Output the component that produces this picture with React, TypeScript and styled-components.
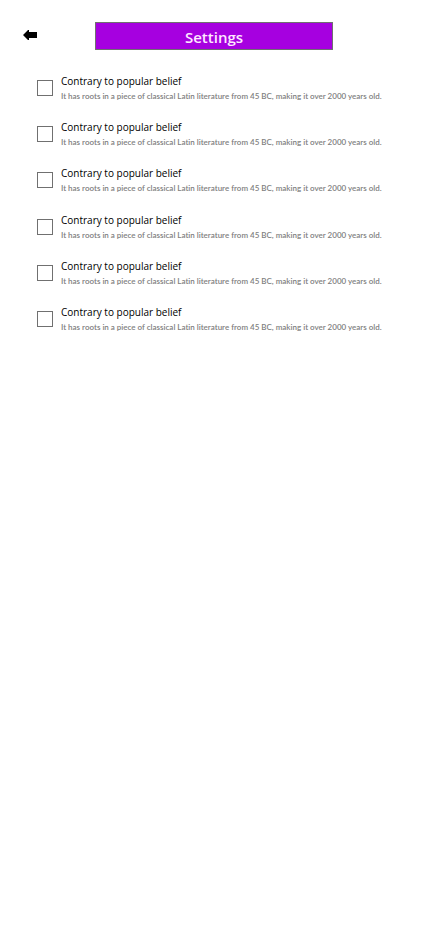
import React from "react";
import styled, { createGlobalStyle } from "styled-components";

const GlobalStyle = createGlobalStyle`
  * { box-sizing: border-box; }
  body { margin: 0; background: #ffffff; font-family: "Open Sans", "Noto Sans", sans-serif; }
`;

const Page = styled.div`
  padding: 22px 23px;
`;

const Header = styled.header`
  display: grid;
  grid-template-columns: 72px 1fr 72px;
  align-items: center;
`;

const BackButton = styled.button`
  width: 14px;
  height: 12px;
  margin: 0 0 2px;
  padding: 0;
  border: 0;
  background: none;
  cursor: pointer;
  svg { display: block; }
`;

const Title = styled.h1`
  height: 28px;
  margin: 0;
  border: 1px solid #707070;
  background: #a600e0;
  color: #ffe8ff;
  font-size: 15px;
  font-weight: 600;
  line-height: 28px;
  text-align: center;
`;

const OptionList = styled.main`
  display: flex;
  flex-direction: column;
  justify-content: space-between;
  min-height: 285px;
  padding: 24px 13px 0 14px;
`;

const Option = styled.label`
  display: grid;
  grid-template-columns: 16px 1fr;
  column-gap: 8px;
`;

const Checkbox = styled.input`
  appearance: none;
  width: 16px;
  height: 16px;
  margin: 6px 0 0;
  border: 1px solid #707070;
  background: #ffffff;
  &:checked { background: #a600e0; }
`;

const OptionTitle = styled.span`
  display: block;
  color: #000000;
  font-size: 10px;
  line-height: 14px;
`;

const OptionText = styled.span`
  display: block;
  color: #808080;
  font-family: Lato, "Open Sans", sans-serif;
  font-size: 8px;
  font-weight: 600;
  font-variant-ligatures: none;
  line-height: 16px;
  white-space: nowrap;
`;

const options = [1, 2, 3, 4, 5, 6];

export default function App() {
  return (
    <Page>
      <GlobalStyle />
      <Header>
        <BackButton type="button" aria-label="Back">
          <svg width="14" height="12" viewBox="0 0 14 12">
            <path d="M0 6 L5 1 H6 V3 H14 V9 H6 V11 H5 Z" fill="#000" />
          </svg>
        </BackButton>
        <Title>Settings</Title>
      </Header>
      <OptionList>
        {options.map((id) => (
          <Option key={id}>
            <Checkbox type="checkbox" />
            <span>
              <OptionTitle>Contrary to popular belief</OptionTitle>
              <OptionText>
                It has roots in a piece of classical Latin literature from 45 BC, making it over 2000 years old.
              </OptionText>
            </span>
          </Option>
        ))}
      </OptionList>
    </Page>
  );
}
